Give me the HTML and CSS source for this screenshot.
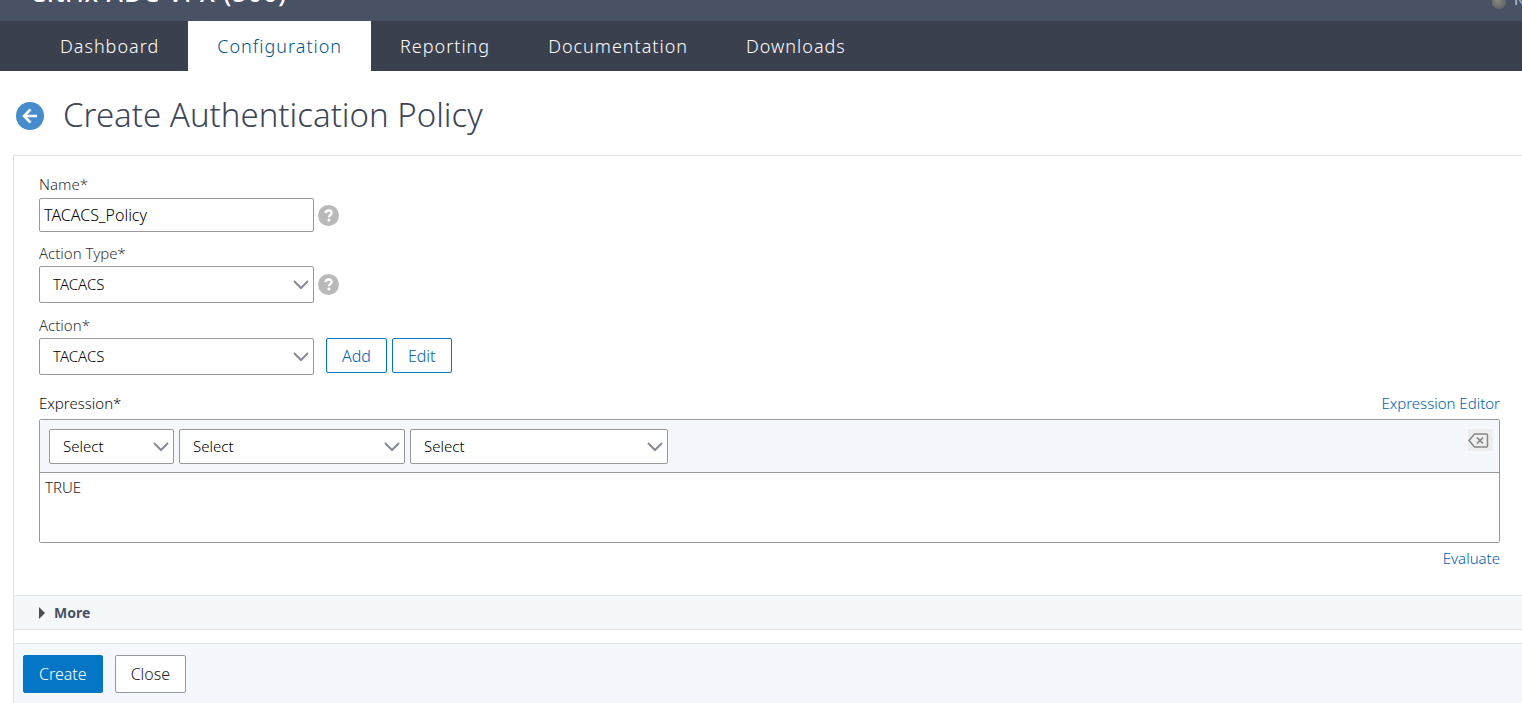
FILE: index.html
```html
<!DOCTYPE html>
<html lang="en">
<head>
<meta charset="utf-8">
<title>Create Authentication Policy</title>
<link rel="stylesheet" href="styles.css">
</head>
<body>
<header class="masthead">
  <div class="product">Citrix ADC VPX (500)</div>
  <div class="node"><span class="orb"></span><span class="node-label">N</span></div>
</header>
<nav class="tabs">
  <a class="tab" href="#">Dashboard</a>
  <a class="tab tab-active" href="#">Configuration</a>
  <a class="tab" href="#">Reporting</a>
  <a class="tab" href="#">Documentation</a>
  <a class="tab" href="#">Downloads</a>
</nav>
<main class="page">
  <div class="heading">
    <button class="icon-button" type="button" aria-label="Back">
      <svg width="28" height="28" viewBox="0 0 28 28"><circle cx="14" cy="14" r="14" fill="#468ccd"/><path d="M14.5 7.5L8 14l6.5 6.500M8 14h13" fill="none" stroke="#fff" stroke-width="2.600"/></svg>
    </button>
    <h1 class="title">Create Authentication Policy</h1>
  </div>
  <form class="panel">
    <div class="fields">
      <label class="label" for="name">Name*</label>
      <div class="row">
        <input class="input" id="name" type="text" value="TACACS_Policy">
        <button class="icon-button" type="button" aria-label="Name help"><svg width="21" height="21" viewBox="0 0 21 21"><circle cx="10.500" cy="10.500" r="10.500" fill="#b9b9b9"/><path d="M7.500 8.200C7.700 6.200 9 5.500 10.600 5.500c1.800 0 3 .9 3 2.400 0 2.200-2.700 2.200-2.700 4.400" fill="none" stroke="#fff" stroke-width="2.300"/><circle cx="10.900" cy="15" r="1.500" fill="#fff"/></svg></button>
      </div>
      <label class="label label-type" for="type">Action Type*</label>
      <div class="row">
        <div class="select"><select class="control" id="type"><option>TACACS</option></select><svg class="chevron" width="16" height="10" viewBox="0 0 16 10"><path d="M1 1l7 7 7-7"/></svg></div>
        <button class="icon-button" type="button" aria-label="Action type help"><svg width="21" height="21" viewBox="0 0 21 21"><circle cx="10.500" cy="10.500" r="10.500" fill="#b9b9b9"/><path d="M7.500 8.200C7.700 6.200 9 5.500 10.600 5.500c1.800 0 3 .9 3 2.400 0 2.200-2.700 2.200-2.700 4.400" fill="none" stroke="#fff" stroke-width="2.300"/><circle cx="10.900" cy="15" r="1.500" fill="#fff"/></svg></button>
      </div>
      <label class="label label-action" for="action">Action*</label>
      <div class="row row-action">
        <div class="select"><select class="control" id="action"><option>TACACS</option></select><svg class="chevron" width="16" height="10" viewBox="0 0 16 10"><path d="M1 1l7 7 7-7"/></svg></div>
        <div class="buttons">
          <button class="outline" type="button">Add</button>
          <button class="outline" type="button">Edit</button>
        </div>
      </div>
      <div class="expression-head">
        <label class="label label-dark" for="expression">Expression*</label>
        <a class="link" href="#">Expression Editor</a>
      </div>
      <div class="expression">
        <div class="toolbar">
          <div class="select select-small"><select class="control" aria-label="Expression prefix"><option>Select</option></select><svg class="chevron" width="16" height="10" viewBox="0 0 16 10"><path d="M1 1l7 7 7-7"/></svg></div>
          <div class="select select-medium"><select class="control" aria-label="Expression member"><option>Select</option></select><svg class="chevron" width="16" height="10" viewBox="0 0 16 10"><path d="M1 1l7 7 7-7"/></svg></div>
          <div class="select select-large"><select class="control" aria-label="Expression operator"><option>Select</option></select><svg class="chevron" width="16" height="10" viewBox="0 0 16 10"><path d="M1 1l7 7 7-7"/></svg></div>
          <button class="clear" type="button" aria-label="Clear expression"><svg width="21" height="15" viewBox="0 0 21 15"><path d="M1 7.500L6.500 1H18.500Q19.500 1 19.500 2V13Q19.500 14 18.500 14H6.500Z" fill="none" stroke="#858585" stroke-width="1.500"/><path d="M9 4.500l6 6M15 4.500l-6 6" stroke="#858585" stroke-width="1.700"/></svg></button>
        </div>
        <textarea class="area" id="expression">TRUE</textarea>
      </div>
      <a class="link evaluate" href="#">Evaluate</a>
    </div>
    <button class="more" type="button"><svg width="6" height="12" viewBox="0 0 6 12"><path d="M0 0L6 6L0 12Z" fill="#4c4c4c"/></svg>More</button>
    <div class="footer">
      <button class="action primary" type="submit">Create</button>
      <button class="action" type="button">Close</button>
    </div>
  </form>
</main>
</body>
</html>
```
FILE: styles.css
```css
* { box-sizing: border-box; }
html, body { height: 100%; }
body {
  margin: 0;
  display: flex;
  flex-direction: column;
  overflow: hidden;
  background: #fff;
  color: #000;
  font: 300 15px/20px "Noto Sans", sans-serif;
}
button, input, select, textarea { font: inherit; color: inherit; margin: 0; }
a { text-decoration: none; }
.masthead {
  display: flex;
  justify-content: space-between;
  align-items: flex-end;
  flex: none;
  height: 21px;
  overflow: hidden;
  padding: 0 0 12px 30px;
  background: #495164;
  color: #fff;
  white-space: nowrap;
}
.product { padding-bottom: 5px; font-size: 25px; line-height: 24px; font-weight: 500; letter-spacing: 1px; }
.node { display: flex; align-items: flex-end; gap: 8px; width: 30px; color: #a9d3f5; font-weight: 400; }
.orb { flex: none; width: 14px; height: 14px; border-radius: 50%; background: radial-gradient(circle at 40% 40%, #8a8a86, #555); }
.node-label { padding-bottom: 3px; line-height: 14px; }
.tabs { display: flex; flex: none; padding-left: 31px; background: #3a404d; }
.tab {
  padding: 0 29px;
  color: #fff;
  font-size: 18px;
  line-height: 50px;
  letter-spacing: 1px;
}
.tab-active { background: #fff; color: #02568a; }
.page { display: flex; flex: 1; flex-direction: column; padding-left: 13px; }
.heading { display: flex; align-items: center; gap: 19px; height: 84px; padding: 6px 3px 0; }
.title { margin: 0; padding-bottom: 2px; color: #3d4558; font-size: 33px; line-height: 48px; font-weight: 300; }
.icon-button { display: flex; padding: 0; border: 0; background: none; }
.panel { display: flex; flex: 1; flex-direction: column; border: solid #e1e4e6; border-width: 1px 0 0 1px; }
.fields { display: flex; flex-direction: column; padding: 16px 22px 24px 25px; }
.label { color: #333; line-height: 24px; }
.fields > .label:first-child { margin-bottom: 2px; }
.label-type { margin-top: 9px; margin-bottom: 1px; }
.label-action { margin-top: 10px; margin-bottom: 1px; }
.label-dark { color: #111; }
.row { display: flex; align-items: center; gap: 4px; }
.row-action { align-items: flex-start; gap: 12px; }
.input { width: 275px; height: 34px; padding: 0 4px; border: 1px solid #999; border-radius: 2px; background: #fff; font-size: 16px; }
.select { display: grid; align-items: center; width: 275px; height: 37px; }
.control {
  grid-area: 1 / 1;
  width: 100%;
  height: 100%;
  appearance: none;
  padding: 0 13px 2px;
  border: 1px solid #999;
  border-radius: 2px;
  background: #fff;
}
.chevron { grid-area: 1 / 1; justify-self: end; margin-right: 5px; pointer-events: none; fill: none; stroke: #858b96; stroke-width: 2; }
.buttons { display: flex; gap: 5px; }
.outline { height: 35px; padding: 0 15px; border: 1px solid #0575c5; border-radius: 2px; background: #fff; color: #0060b0; font-size: 16px; }
.expression-head { display: flex; justify-content: space-between; margin-top: 16px; padding-bottom: 4px; }
.link { color: #0060b0; line-height: 24px; }
.expression { display: flex; flex-direction: column; border: 1px solid #999; border-radius: 2px; }
.toolbar { display: flex; gap: 5px; height: 53px; padding: 9px 6px 0 9px; border-bottom: 1px solid #999; background: #f4f8fc; }
.toolbar .select { height: 35px; }
.toolbar .select-small { width: 125px; }
.toolbar .select-medium { width: 226px; }
.toolbar .select-large { width: 258px; }
.clear { display: flex; align-items: center; width: 25px; height: 22px; margin-left: auto; padding: 0; border: 0; background: #eee; }
.area { display: block; height: 69px; padding: 4px 5px; border: 0; background: #fff; color: #222; resize: none; }
.evaluate { align-self: flex-end; margin-top: 3px; margin-bottom: 1px; }
.more {
  display: flex;
  align-items: center;
  gap: 9px;
  height: 35px;
  padding: 0 25px;
  border: solid #e1e4e6;
  border-width: 1px 0;
  background: #f4f8fa;
  color: #495164;
  font-size: 14px;
  font-weight: 700;
}
.footer { display: flex; flex: 1; align-items: flex-start; gap: 12px; margin-top: 13px; padding: 11px 9px 0; border-top: 1px solid #e1e4e6; background: #f4f8fc; }
.action { height: 38px; padding: 0 15px; border: 1px solid #999; border-radius: 2px; background: #fff; color: #222; font-size: 16px; }
.primary { border-color: #0575c5; background: #0575c5; color: #fff; }
```
